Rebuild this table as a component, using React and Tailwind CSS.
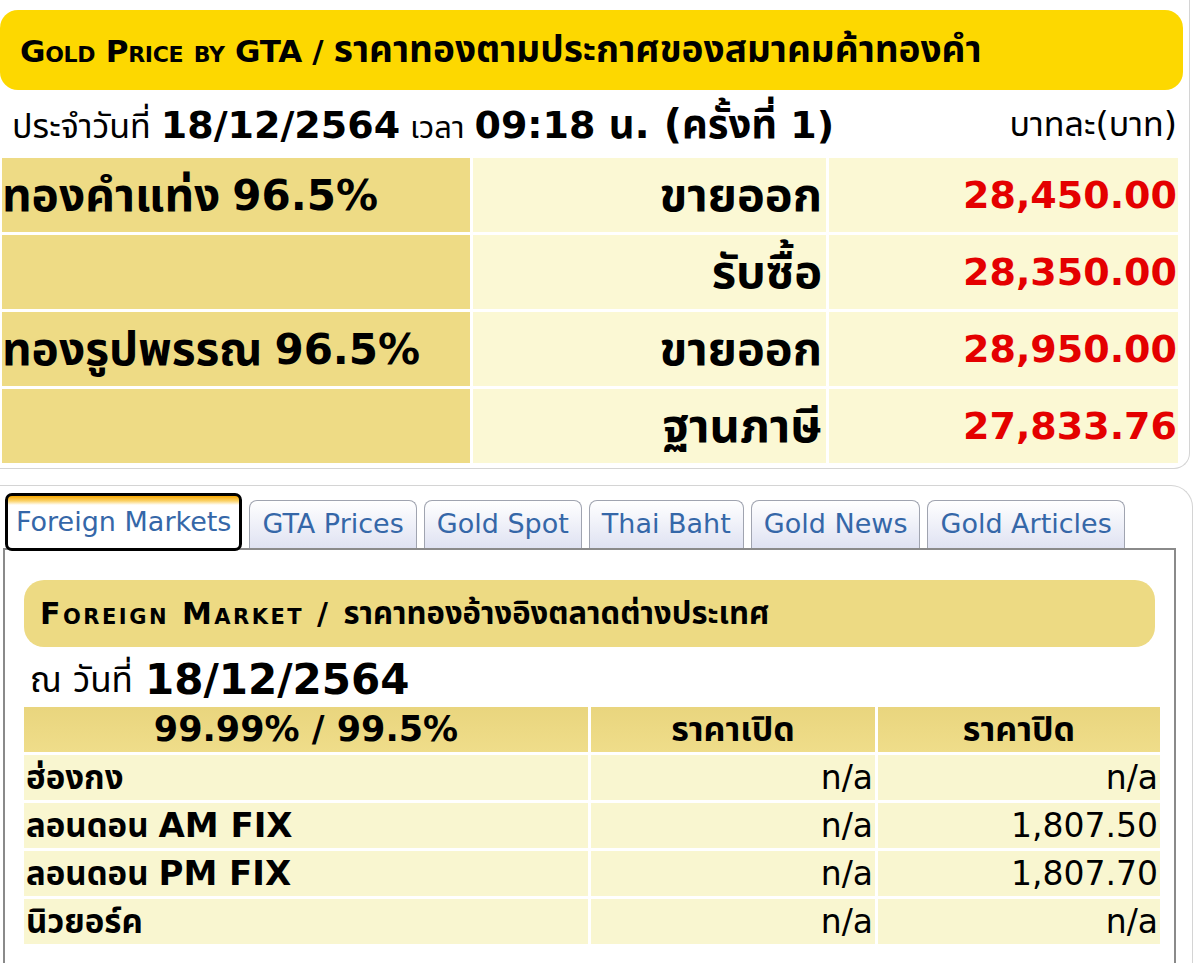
const FONT = "font-['Tahoma','DejaVu_Sans','Noto_Sans_Thai','Noto_Sans',sans-serif]"

const gtaRows = [
  { label: 'ทองคำแท่ง', pct: '96.5%', kind: 'ขายออก', price: '28,450.00' },
  { label: '', pct: '', kind: 'รับซื้อ', price: '28,350.00' },
  { label: 'ทองรูปพรรณ', pct: '96.5%', kind: 'ขายออก', price: '28,950.00' },
  { label: '', pct: '', kind: 'ฐานภาษี', price: '27,833.76' },
]

const tabs = ['Foreign Markets', 'GTA Prices', 'Gold Spot', 'Thai Baht', 'Gold News', 'Gold Articles']

const foreign = [
  { th: 'ฮ่องกง', en: '', open: 'n/a', close: 'n/a' },
  { th: 'ลอนดอน', en: 'AM FIX', open: 'n/a', close: '1,807.50' },
  { th: 'ลอนดอน', en: 'PM FIX', open: 'n/a', close: '1,807.70' },
  { th: 'นิวยอร์ค', en: '', open: 'n/a', close: 'n/a' },
]

export default function App() {
  return (
    <div className={`w-[1200px] h-[963px] overflow-hidden bg-white text-black ${FONT}`}>

      {/* GTA price box */}
      <div className="w-[1190px] h-[469px] pt-[10px] border-r border-b border-[#d4d4d4] rounded-br-[16px]">
        <div className="w-[1183px] h-[80px] bg-[#FDD800] rounded-[18px] flex items-center pl-[20px]">
          <h1 className="text-[31px] font-bold [font-variant:small-caps] tracking-[-0.3px] whitespace-nowrap">
            Gold Price by GTA / <span className="text-[37px] tracking-normal">ราคาทองตามประกาศของสมาคมค้าทองคำ</span>
          </h1>
        </div>

        <div className="h-[68px] flex items-center justify-between pl-[12px] pr-[12px]">
          <p className="flex items-baseline gap-[10px] whitespace-nowrap">
            <span className="text-[34px]">ประจำวันที่</span>
            <b className="text-[38px]">18/12/2564</b>
            <span className="text-[31px]">เวลา</span>
            <b className="text-[38px]">09:18 <span className="text-[40px]">น. (ครั้งที่</span> 1)</b>
          </p>
          <span className="text-[34px]">บาทละ(บาท)</span>
        </div>

        <div className="grid grid-cols-[467px_353px_349px] gap-[3px] pl-[3px]">
          {gtaRows.map((r, i) => (
            <div key={i} className="contents">
              <div className="h-[74px] bg-[#EEDB85] flex items-center gap-[12px] font-bold -ml-[1px] whitespace-nowrap">
                <span className="text-[46px]">{r.label}</span>
                <span className="text-[42px]">{r.pct}</span>
              </div>
              <div className="h-[74px] bg-[#FBF8D4] flex items-center justify-end pr-[4px] text-[47px] font-bold">{r.kind}</div>
              <div className="h-[74px] bg-[#FBF8D4] flex items-center justify-end pr-[1px] text-[38px] font-bold text-[#E40000]">{r.price}</div>
            </div>
          ))}
        </div>
      </div>

      {/* Tabs box */}
      <div className="mt-[16px] w-[1193px] h-[500px] border-t border-r border-[#d4d4d4] rounded-tr-[22px]">
        <div className="flex items-end gap-[7px] pl-[5px] pt-[7px]">
          {tabs.map((t, i) => i === 0 ? (
            <div key={t} className="h-[58px] px-[8px] flex items-center border-[3px] border-black rounded-[7px] bg-[linear-gradient(#f7a700_0px,#fbd36a_5px,#ffffff_9px)] text-[27px] text-[#3567a8] mb-[-3px] relative z-10 whitespace-nowrap">
              {t}
            </div>
          ) : (
            <div key={t} className="h-[48px] px-[12px] flex items-center border border-[#a0a4b0] border-b-0 rounded-t-[8px] bg-[linear-gradient(#ffffff,#dfe2f2)] text-[27px] text-[#3567a8] whitespace-nowrap">
              {t}
            </div>
          ))}
        </div>

        <div className="ml-[3px] w-[1173px] h-[440px] border-2 border-[#8a8a8a] pt-[30px] px-[19px]">
          <div className="h-[67px] bg-[#EDDA83] rounded-[20px] flex items-center pl-[16px]">
            <h2 className="text-[30px] font-bold [font-variant:small-caps] tracking-[2.5px] whitespace-nowrap">
              Foreign Market / <span className="text-[31px] tracking-normal">ราคาทองอ้างอิงตลาดต่างประเทศ</span>
            </h2>
          </div>

          <div className="h-[60px] flex items-end pl-[6px] gap-[12px] pb-[2px]">
            <span className="text-[35px] leading-[50px]">ณ วันที่</span>
            <b className="text-[42px] leading-[50px]">18/12/2564</b>
          </div>

          <div className="grid grid-cols-[564px_284px_282px] gap-[3px]">
            <div className="h-[45px] bg-[linear-gradient(#e9d57e,#efdd8a)] flex items-center justify-center text-[35px] font-bold">99.99% / 99.5%</div>
            <div className="h-[45px] bg-[linear-gradient(#e9d57e,#efdd8a)] flex items-center justify-center text-[34px] font-bold">ราคาเปิด</div>
            <div className="h-[45px] bg-[linear-gradient(#e9d57e,#efdd8a)] flex items-center justify-center text-[34px] font-bold">ราคาปิด</div>
            {foreign.map((f, i) => (
              <div key={i} className="contents">
                <div className="h-[45px] bg-[#F9F6D0] flex items-center gap-[10px] font-bold pl-[2px] whitespace-nowrap">
                  <span className="text-[33px]">{f.th}</span>
                  {f.en && <span className="text-[34px]">{f.en}</span>}
                </div>
                <div className="h-[45px] bg-[#F9F6D0] flex items-center justify-end text-[33px] pr-[2px]">{f.open}</div>
                <div className="h-[45px] bg-[#F9F6D0] flex items-center justify-end text-[33px] pr-[2px]">{f.close}</div>
              </div>
            ))}
          </div>
        </div>
      </div>
    </div>
  )
}
